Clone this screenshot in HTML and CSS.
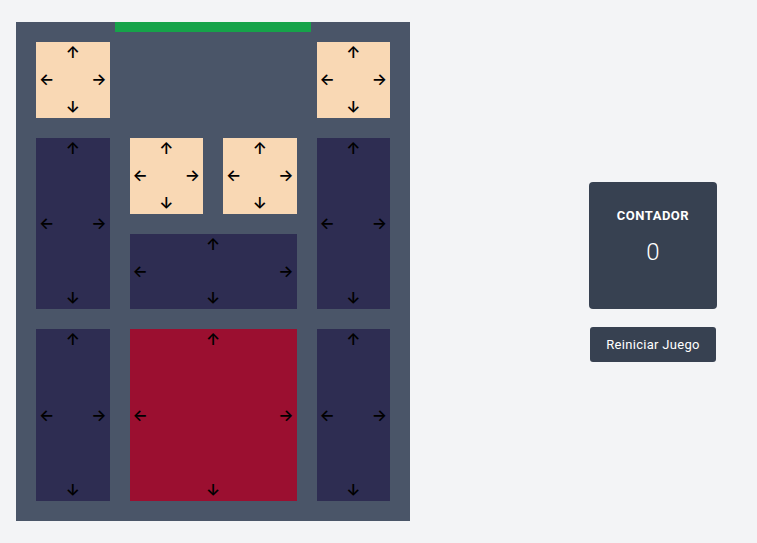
FILE: index.html
```html
<!DOCTYPE html>
<html lang="es">
<head>
<meta charset="utf-8">
<title>Klotski</title>
<link rel="stylesheet" href="styles.css">
</head>
<body>
<div class="page">
  <div class="board">
    <div class="exit"></div>
    <div class="piece small" style="grid-column:1;grid-row:1"><span class="a">↑</span><div class="mid"><span class="a">←</span><span class="a">→</span></div><span class="a">↓</span></div>
    <div class="piece small" style="grid-column:4;grid-row:1"><span class="a">↑</span><div class="mid"><span class="a">←</span><span class="a">→</span></div><span class="a">↓</span></div>
    <div class="piece tall" style="grid-column:1;grid-row:2 / span 2"><span class="a">↑</span><div class="mid"><span class="a">←</span><span class="a">→</span></div><span class="a">↓</span></div>
    <div class="piece small" style="grid-column:2;grid-row:2"><span class="a">↑</span><div class="mid"><span class="a">←</span><span class="a">→</span></div><span class="a">↓</span></div>
    <div class="piece small" style="grid-column:3;grid-row:2"><span class="a">↑</span><div class="mid"><span class="a">←</span><span class="a">→</span></div><span class="a">↓</span></div>
    <div class="piece tall" style="grid-column:4;grid-row:2 / span 2"><span class="a">↑</span><div class="mid"><span class="a">←</span><span class="a">→</span></div><span class="a">↓</span></div>
    <div class="piece tall" style="grid-column:2 / span 2;grid-row:3"><span class="a">↑</span><div class="mid"><span class="a">←</span><span class="a">→</span></div><span class="a">↓</span></div>
    <div class="piece tall" style="grid-column:1;grid-row:4 / span 2"><span class="a">↑</span><div class="mid"><span class="a">←</span><span class="a">→</span></div><span class="a">↓</span></div>
    <div class="piece big" style="grid-column:2 / span 2;grid-row:4 / span 2"><span class="a">↑</span><div class="mid"><span class="a">←</span><span class="a">→</span></div><span class="a">↓</span></div>
    <div class="piece tall" style="grid-column:4;grid-row:4 / span 2"><span class="a">↑</span><div class="mid"><span class="a">←</span><span class="a">→</span></div><span class="a">↓</span></div>
  </div>
  <div class="side">
    <div class="card">
      <div class="label">CONTADOR</div>
      <div class="count">0</div>
    </div>
    <button class="reset">Reiniciar Juego</button>
  </div>
</div>
</body>
</html>
```
FILE: styles.css
```css
* { box-sizing: border-box; }
html, body { margin: 0; padding: 0; }
body {
  background: #f3f4f6;
  font-family: Roboto, "Liberation Sans", sans-serif;
  width: 757px;
  height: 543px;
  overflow: hidden;
}
.page {
  display: flex;
  align-items: center;
  padding: 22px 0 0 16px;
}
.board {
  position: relative;
  width: 394px;
  height: 499px;
  background: #4a5568;
  padding: 20px;
  display: grid;
  grid-template-columns: repeat(4, 1fr);
  grid-template-rows: repeat(5, 1fr);
  gap: 20px;
}
.exit {
  position: absolute;
  top: 0;
  left: 99px;
  width: 196px;
  height: 10px;
  background: #16a34a;
}
.piece {
  display: flex;
  flex-direction: column;
  justify-content: space-between;
  align-items: center;
  padding: 2px 3px 3px;
}
.small { background: #f9d8b4; }
.tall { background: #2e2d52; }
.big { background: #9b0f30; }
.mid {
  display: flex;
  justify-content: space-between;
  align-self: stretch;
}
.a {
  font-family: Inter, sans-serif;
  font-size: 16px;
  font-weight: 600;
  line-height: 16px;
  color: #000;
}
.side {
  margin-left: 179px;
  display: flex;
  flex-direction: column;
  align-items: center;
  gap: 18px;
}
.card {
  width: 128px;
  height: 127px;
  background: #374151;
  border-radius: 4px;
  color: #fff;
  display: flex;
  flex-direction: column;
  align-items: center;
  padding-top: 26px;
}
.label {
  font-size: 13px;
  font-weight: 700;
  letter-spacing: 0.5px;
}
.count {
  margin-top: 15px;
  font-size: 24px;
  font-weight: 300;
}
.reset {
  width: 126px;
  height: 35px;
  background: #374151;
  color: #fff;
  border: none;
  border-radius: 3px;
  font-family: Roboto, "Liberation Sans", sans-serif;
  font-size: 13px;
  letter-spacing: 0.3px;
  padding: 0;
}
```
